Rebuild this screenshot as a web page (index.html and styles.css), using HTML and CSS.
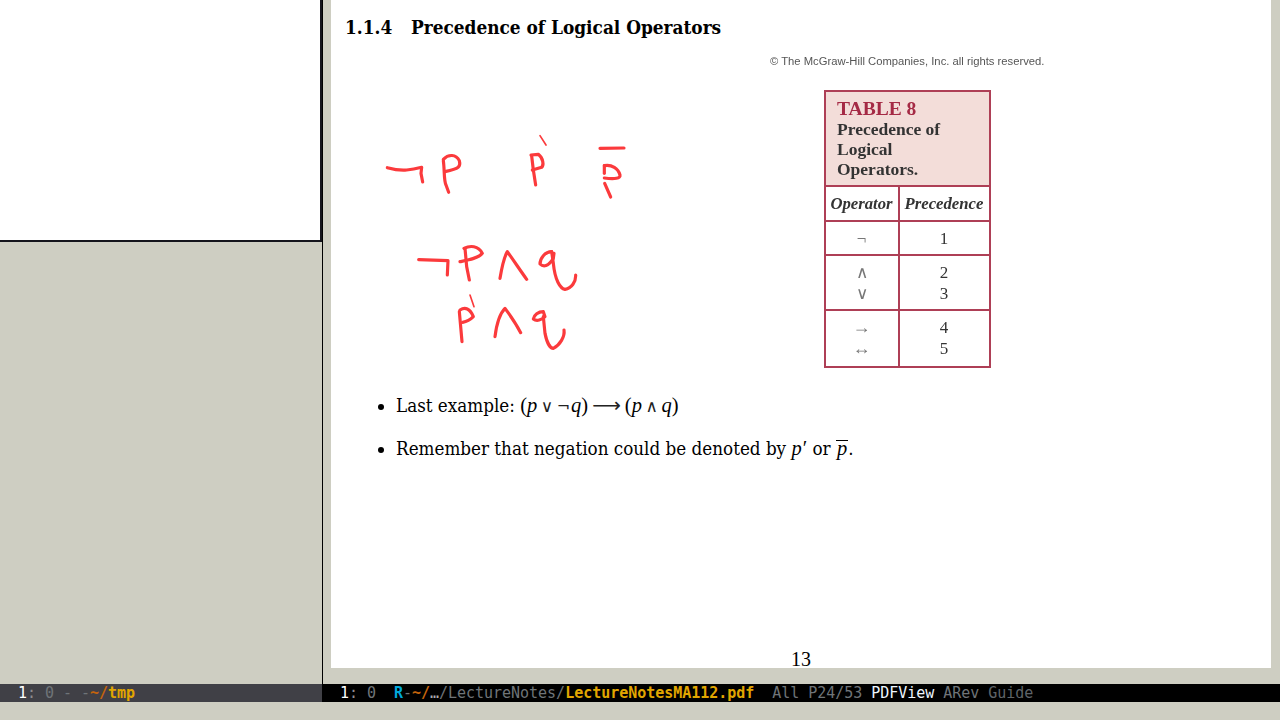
FILE: index.html
```html
<!DOCTYPE html>
<html lang="en">
<head>
<meta charset="utf-8">
<title>LectureNotesMA112.pdf</title>
<link rel="stylesheet" href="styles.css">
</head>
<body>
<div class="desktop">
  <div class="panes">
    <div class="side"><div class="blank"></div></div>
    <div class="viewer">
      <div class="page">
        <h2 class="heading"><span class="num">1.1.4</span>Precedence of Logical Operators</h2>
        <div class="upper">
          <svg class="ink" viewBox="0 0 810 720" aria-hidden="true">
            <g fill="none" stroke="#fb3a3c" stroke-width="9.5" stroke-linecap="round" stroke-linejoin="round">
              <path d="M52 143C70 148 90 152 110 150C125 149 140 146 155 142L153 160L158 186"/>
              <path d="M220 122C224 150 221 180 228 195L236 217"/>
              <path d="M220 118C235 102 258 102 268 122C273 140 268 145 225 155"/>
              <path d="M485 108L490 150L497 195"/>
              <path d="M483 105L505 103C520 115 522 135 515 142L487 150"/>
              <path d="M510 47L528 75" stroke-width="5"/>
              <path d="M690 85L762 84"/>
              <path d="M703 137C725 133 745 145 750 165C752 175 735 178 703 174"/>
              <path d="M703 137L703 160"/>
              <path d="M704 190L722 231"/>
              <path d="M146 419L234 422L232 465"/>
              <path d="M285 385L290 440L298 480"/>
              <path d="M282 385C300 376 325 376 337 400C325 415 295 420 270 425"/>
              <path d="M390 475C395 445 400 415 412 395C430 420 450 450 470 478"/>
              <path d="M545 395C525 395 510 415 510 432C520 442 535 440 550 415L552 400"/>
              <path d="M545 395L550 430C555 480 570 505 585 508C605 505 618 485 617 465"/>
              <path d="M300 525L312 560" stroke-width="5"/>
              <path d="M268 575L272 620L276 665"/>
              <path d="M270 570C285 560 300 565 310 590C300 600 290 605 278 607"/>
              <path d="M375 650C380 610 390 580 405 565C420 585 440 615 452 638"/>
              <path d="M520 575C505 575 492 585 490 597C500 605 515 600 525 590L520 575"/>
              <path d="M520 590L525 640C530 665 540 685 550 685C570 675 585 650 582 630"/>
            </g>
          </svg>
          <figure class="figure">
            <figcaption class="copyright">© The McGraw-Hill Companies, Inc. all rights reserved.</figcaption>
            <div class="table8">
              <div class="t-title">
                <div class="t-label">TABLE 8</div>
                <div>Precedence of</div>
                <div>Logical</div>
                <div>Operators.</div>
              </div>
              <div class="t-row t-head"><div class="t-op">Operator</div><div class="t-prec">Precedence</div></div>
              <div class="t-row t-r1"><div class="t-op">¬</div><div class="t-prec">1</div></div>
              <div class="t-row t-r2"><div class="t-op">∧<br>∨</div><div class="t-prec">2<br>3</div></div>
              <div class="t-row t-r3"><div class="t-op">→<br>↔</div><div class="t-prec">4<br>5</div></div>
            </div>
          </figure>
        </div>
        <ul class="items">
          <li>Last example: <span class="math">(<i>p</i><span class="sym">∨</span><span class="neg">¬</span><i>q</i>)<span class="arrow">⟶</span>(<i>p</i><span class="sym">∧</span><i>q</i>)</span></li>
          <li>Remember that negation could be denoted by <span class="math"><i>p</i><span class="prime">′</span></span> or <span class="math"><i class="over">p</i></span>.</li>
        </ul>
        <div class="pageno">13</div>
      </div>
    </div>
  </div>
  <div class="bars">
    <div class="bar bar-side"><span class="w">  1</span><span class="g">: </span><span class="d">0 - -</span><span class="o">~/</span><span class="y">tmp</span></div>
    <div class="bar bar-main"><span class="w">  1</span><span class="g">: </span><span class="d">0  </span><span class="c">R</span><span class="d">-</span><span class="o">~/</span><span class="g2">…</span><span class="d">/LectureNotes/</span><span class="y">LectureNotesMA112.pdf</span><span class="d">  All P24/53 </span><span class="w2">PDFView</span><span class="d"> ARev </span><span class="d2">Guide</span></div>
  </div>
</div>
</body>
</html>
```
FILE: styles.css
```css
* { box-sizing: border-box; }
html, body { margin: 0; height: 100%; overflow: hidden; }
body { background: #cecec2; }
.desktop { width: 1280px; height: 720px; display: flex; flex-direction: column; }
.panes { height: 684px; display: flex; }
.side { width: 323px; border-right: 1px solid #000; }
.blank { width: 322px; height: 242px; background: #fff; border-right: 2px solid #14141c; border-bottom: 2px solid #14141c; }
.viewer { flex: 1; padding-left: 8px; }
.page {
  width: 940px; height: 668px; background: #fff; color: #000;
  display: flex; flex-direction: column;
  font-family: "DejaVu Serif Condensed", "DejaVu Serif", serif;
}
.heading { margin: 0; padding: 15px 0 0 14px; font-size: 18.85px; line-height: 24px; font-weight: 700; }
.num { display: inline-block; width: 66px; }
.upper { display: flex; height: 354px; }
.ink { display: block; width: 270px; height: 240px; margin: 81px 0 0 39px; }
.figure { margin: 0; padding-top: 15px; margin-left: 130px; filter: blur(0.45px); }
.copyright { font: 11.25px/14px "Liberation Sans", Arial, sans-serif; color: #555; white-space: nowrap; }
.table8 {
  width: 167px; height: 278px; margin: 22px 0 0 53.5px;
  border: 2px solid #ae3f56;
  display: flex; flex-direction: column;
  font-family: "Liberation Serif", serif; color: #333;
}
.t-title { height: 95px; background: #f3ddd9; padding: 7px 0 0 11.5px; font-size: 17.5px; line-height: 20px; font-weight: 700; border-bottom: 2px solid #ae3f56; }
.t-label { color: #a52a45; font-size: 19.5px; }
.t-row { display: flex; border-bottom: 2px solid #ae3f56; }
.t-row:last-child { border-bottom: 0; flex: 1; }
.t-op { width: 74px; border-right: 2px solid #ae3f56; text-align: center; display: flex; align-items: center; justify-content: center; color: #777; }
.t-prec { flex: 1; text-align: center; display: flex; align-items: center; justify-content: center; }
.t-head { height: 35px; font: italic 700 16.7px/20px "Liberation Serif", serif; }
.t-head .t-op { color: #333; }
.t-r1, .t-r2, .t-r3 { font-size: 17px; line-height: 20.5px; font-weight: 400; }
.t-r1 { height: 34px; }
.t-r2 { height: 55px; }
.t-r1 > div, .t-r2 > div { padding-top: 2px; }
.t-r3 .t-op { font-size: 18px; line-height: 21px; padding-bottom: 2px; }
.items { list-style: disc; margin: 0; padding: 0 0 0 65px; font-size: 18.67px; line-height: 24px; }
.items li { margin-bottom: 17px; }
.math { font-family: "Liberation Serif", serif; font-size: 20.5px; }
.sym { font-family: "DejaVu Sans", sans-serif; font-size: 17px; margin: 0 3.5px; color: #222; }
.neg { font-family: "DejaVu Sans", sans-serif; font-size: 16px; margin-right: 1px; color: #222; }
.arrow { font-family: "DejaVu Sans", sans-serif; font-size: 20px; margin: 0 4px; line-height: 20px; color: #222; }
.prime { margin-left: 1px; }
.over { display: inline-block; line-height: 14px; padding: 0 1px; border-top: 1px solid #000; }
.pageno { margin-top: auto; padding-left: 460px; font-family: "Liberation Serif", serif; font-size: 20px; line-height: 18px; }
.bars { height: 18px; display: flex; font: 15px/18px "DejaVu Sans Mono", monospace; white-space: pre; letter-spacing: -0.03px; }
.bar { height: 18px; overflow: hidden; }
.bar-side { width: 322px; background: #404046; }
.bar-main { flex: 1; background: #000; }
.w { color: #fff; }
.g { color: #8c8c8c; }
.g2 { color: #aaa; }
.d { color: #6f7478; }
.d2 { color: #5f6468; }
.o { color: #c4640c; font-weight: 700; }
.y { color: #e2a600; font-weight: 700; }
.c { color: #00a8dc; font-weight: 700; }
.w2 { color: #eef6ff; }
```
